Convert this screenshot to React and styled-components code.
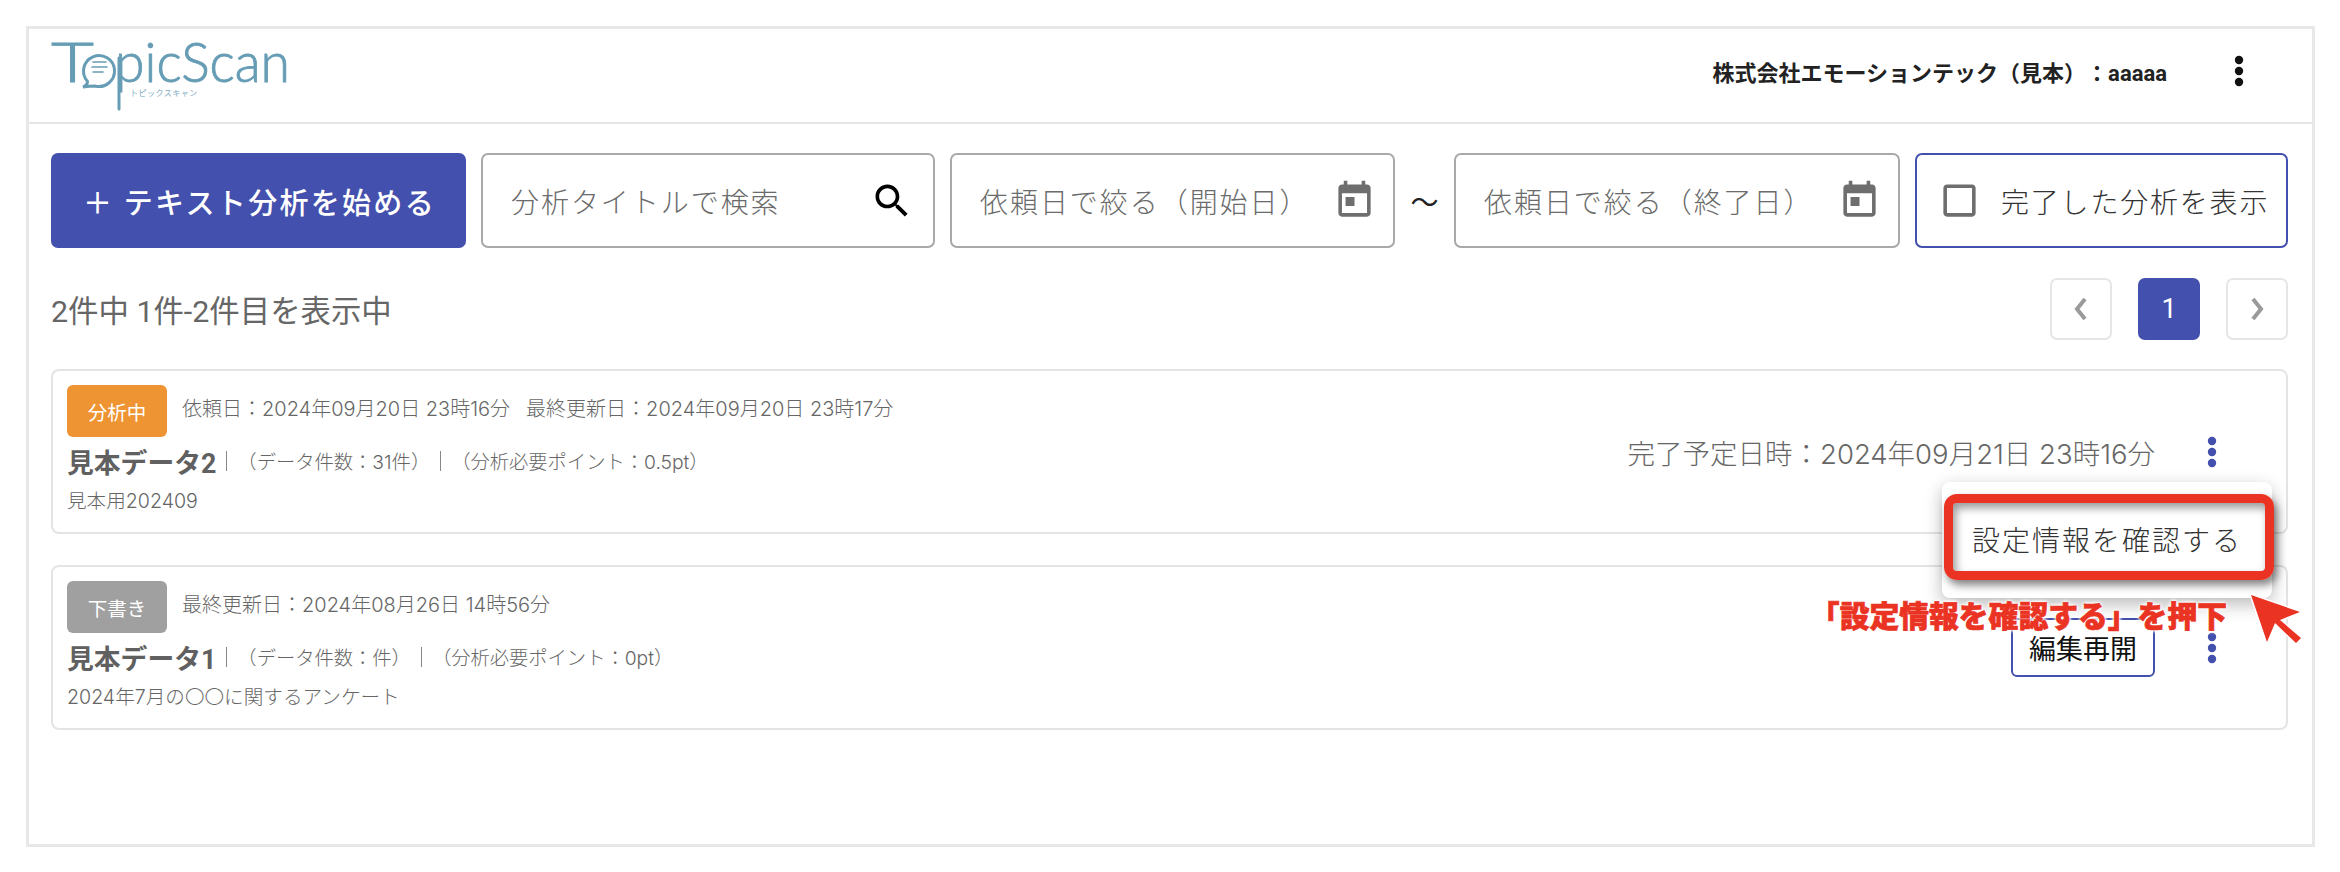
import React from 'react'
import styled, { createGlobalStyle } from 'styled-components'

const BLUE = '#4350ad'
const RED = '#ea3323'
const BODY_FONT = 'Inter, "Noto Sans CJK JP", sans-serif'

const GlobalStyle = createGlobalStyle`
  html, body { margin: 0; padding: 0; background: #fff; }
  body {
    font-family: Roboto, "Noto Sans CJK JP", sans-serif;
    text-spacing-trim: space-all;
  }
  * { box-sizing: border-box; }
`

const Page = styled.div`
  padding: 26px 25px 25px 26px;
`
const Frame = styled.div`
  height: 821px;
  border: 3px solid #e8e8e8;
`
const Header = styled.header`
  height: 95px;
  border-bottom: 2px solid #e6e6e6;
  display: flex;
  align-items: center;
  padding: 0 61px 10px 22px;
`
const Logo = styled.svg`
  width: 245px;
  height: 76px;
  align-self: flex-start;
  margin-top: 7px;
  display: block;
  overflow: visible;
`
const Account = styled.div`
  margin-left: auto;
  margin-right: 60px;
  font-size: 22px;
  font-weight: 700;
  color: #222;
`
const Content = styled.main`
  padding: 29px 24px 0 22px;
`
const Toolbar = styled.div`
  display: flex;
  gap: 15px;
  height: 95px;
`
const StartButton = styled.button`
  width: 415px;
  border: 0;
  border-radius: 7px;
  background: ${BLUE};
  color: #fff;
  font: 500 29px Roboto, "Noto Sans CJK JP", sans-serif;
  letter-spacing: 2.3px;
  padding: 0 0 0 2px;
`
const Field = styled.div`
  width: ${p => p.$w}px;
  display: flex;
  align-items: center;
  justify-content: space-between;
  padding: 0 ${p => p.$pr}px 0 ${p => p.$pl}px;
  border: 2px solid #a9a9a9;
  border-radius: 7px;
  font-size: 28px;
  font-weight: 300;
  letter-spacing: 1.95px;
  color: #6b6b6b;
`
const Tilde = styled.span`
  width: 29px;
  text-align: center;
  align-self: center;
  font-size: 28px;
  color: #222;
`
const ToggleBox = styled.label`
  flex: 1;
  display: flex;
  align-items: center;
  gap: 20px;
  padding-left: 21px;
  border: 2px solid ${BLUE};
  border-radius: 7px;
  font-size: 28px;
  font-weight: 300;
  letter-spacing: 1.8px;
  color: #333;
`
const Summary = styled.div`
  margin-top: 30px;
  height: 62px;
  display: flex;
  align-items: center;
  justify-content: space-between;
`
const Count = styled.div`
  font-size: 30.4px;
  color: #666;
`
const Pager = styled.nav`
  display: flex;
  gap: 26px;
`
const PageButton = styled.div`
  width: 62px;
  height: 62px;
  display: flex;
  align-items: center;
  justify-content: center;
  border: 2px solid ${p => (p.$active ? BLUE : '#e6e6e6')};
  border-radius: 7px;
  background: ${p => (p.$active ? BLUE : '#fff')};
  color: #fff;
  font-size: 27px;
`
const Cards = styled.div`
  margin-top: 29px;
  display: flex;
  flex-direction: column;
  gap: 31px;
`
const Card = styled.article`
  position: relative;
  height: 165px;
  padding: 14px 62px 0 14px;
  border: 2px solid #e4e4e4;
  border-radius: 8px;
  display: flex;
  justify-content: space-between;
`
const CardMain = styled.div`
  display: flex;
  flex-direction: column;
`
const MetaRow = styled.div`
  display: flex;
  align-items: center;
  gap: 15px;
  height: 52px;
  margin-bottom: 6px;
`
const Badge = styled.span`
  width: 100px;
  height: 52px;
  display: flex;
  align-items: center;
  justify-content: center;
  border-radius: 6px;
  background: ${p => p.$color};
  color: #fff;
  font-size: 19.5px;
`
const Dates = styled.div`
  display: flex;
  gap: 16px;
  font-family: ${BODY_FONT};
  font-size: 20px;
  font-weight: 300;
  color: #666;
  margin-top: -8px;
`
const TitleRow = styled.div`
  display: flex;
  align-items: center;
  height: 36px;
`
const Title = styled.h2`
  margin: 0;
  font-size: 26.8px;
  font-weight: 700;
  color: #606060;
`
const Sep = styled.i`
  width: 1px;
  height: 20px;
  margin: 0 10px;
  background: #888;
`
const Stat = styled.span`
  font-family: ${BODY_FONT};
  font-size: 19.3px;
  font-weight: 300;
  color: #666;
`
const Desc = styled.div`
  margin-top: 6px;
  font-family: ${BODY_FONT};
  font-size: 19.6px;
  font-weight: 300;
  color: #666;
`
const CardSide = styled.div`
  display: flex;
  align-items: center;
  gap: ${p => p.$gap}px;
  margin-top: -14px;
  height: 161px;
`
const Due = styled.div`
  font-family: ${BODY_FONT};
  font-size: 27.5px;
  font-weight: 300;
  color: #666;
`
const ResumeButton = styled.button`
  width: 144px;
  height: 59px;
  background: #fff;
  border: 2px solid ${BLUE};
  border-radius: 6px;
  font: 400 27px Roboto, "Noto Sans CJK JP", sans-serif;
  color: #111;
  padding: 0;
`
const Kebab = styled.svg`
  width: 24px;
  height: 32px;
  flex: none;
  display: block;
`
const Menu = styled.div`
  position: absolute;
  z-index: 5;
  top: 111px;
  right: 14px;
  width: 330px;
  height: 116px;
  padding-bottom: 2px;
  display: flex;
  align-items: center;
  justify-content: center;
  border-radius: 8px;
  background: #fff;
  box-shadow: 0 6px 18px rgba(0, 0, 0, 0.28);
  font-size: 28px;
  font-weight: 300;
  letter-spacing: 2px;
  color: #333;
`
const Highlight = styled.div`
  position: absolute;
  top: 12px;
  left: 2px;
  right: -2px;
  height: 86px;
  border: 9px solid ${RED};
  border-radius: 13px;
  box-shadow: 3px 5px 9px rgba(0, 0, 0, 0.5), inset 3px 5px 8px rgba(0, 0, 0, 0.4);
`
const Caption = styled.div`
  position: absolute;
  top: 110px;
  right: 45px;
  white-space: nowrap;
  font-size: 29.8px;
  font-weight: 900;
  letter-spacing: 0;
  color: ${RED};
  -webkit-text-stroke: 0.7px ${RED};
  text-shadow: 0 0 3px #fff, 0 0 3px #fff, 0 0 4px #fff, 0 0 4px #fff;
`
const Pointer = styled.svg`
  position: absolute;
  top: 108px;
  left: 305px;
  width: 60px;
  height: 60px;
  overflow: visible;
`

const Dots = ({ color, cy = 16 }) => (
  <Kebab viewBox="0 0 24 32">
    <circle cx="12" cy={cy - 11} r="4.2" fill={color} />
    <circle cx="12" cy={cy} r="4.2" fill={color} />
    <circle cx="12" cy={cy + 11} r="4.2" fill={color} />
  </Kebab>
)

const CalendarIcon = () => (
  <svg width="43" height="43" viewBox="0 0 24 24" fill="#6e6e6e">
    <path d="M19 3h-1V1h-2v2H8V1H6v2H5c-1.11 0-1.99.9-1.99 2L3 19c0 1.1.89 2 2 2h14c1.1 0 2-.9 2-2V5c0-1.1-.9-2-2-2zm0 16H5V8h14v11zM7 10h5v5H7z" />
  </svg>
)

const SearchIcon = () => (
  <svg width="44" height="44" viewBox="0 0 24 24" fill="#000">
    <path d="M15.5 14h-.79l-.28-.27C15.41 12.59 16 11.11 16 9.5 16 5.91 13.09 3 9.5 3S3 5.91 3 9.5 5.91 16 9.5 16c1.61 0 3.09-.59 4.23-1.57l.27.28v.79l5 4.99L20.49 19l-4.99-5zm-6 0C7.01 14 5 11.99 5 9.5S7.01 5 9.5 5 14 7.01 14 9.5 11.99 14 9.5 14z" />
  </svg>
)

const CheckboxIcon = () => (
  <svg width="43" height="43" viewBox="0 0 24 24" fill="#6e6e6e">
    <path d="M19 5v14H5V5h14m0-2H5c-1.1 0-2 .9-2 2v14c0 1.1.9 2 2 2h14c1.1 0 2-.9 2-2V5c0-1.1-.9-2-2-2z" />
  </svg>
)

const Chevron = ({ d }) => (
  <svg width="22" height="30" viewBox="0 0 22 30" fill="none" stroke="#9a9a9a" strokeWidth="4">
    <path d={d} />
  </svg>
)

const TopicScanLogo = () => (
  <Logo viewBox="0 0 245 76">
    <g fill="#669db5" stroke="#669db5" strokeWidth="0.9" fontFamily="Lato, sans-serif" fontWeight="300">
      <text x="0" y="46" fontSize="56" textLength="43" lengthAdjust="spacingAndGlyphs">T</text>
      <text x="64" y="46" fontSize="56" textLength="175" lengthAdjust="spacingAndGlyphs">picScan</text>
    </g>
    <text x="79" y="60" fill="#7fadc1" fontSize="8" fontFamily="'Noto Sans CJK JP', sans-serif" letterSpacing="0.5">トピックスキャン</text>
    <g fill="none" stroke="#669db5" strokeWidth="3" strokeLinecap="round">
      <path d="M32 51Q36.5 49 36.5 45.4A15.5 15.5 0 1 1 44 50Q38 50 32 51Z" fill="#fff" />
      <path d="M42 26h13M41 31h15M42 36h10" strokeWidth="1.6" />
      <path d="M68 22v51" />
    </g>
  </Logo>
)

export default function App() {
  return (
    <>
      <GlobalStyle />
      <Page>
        <Frame>
          <Header>
            <TopicScanLogo />
            <Account>株式会社エモーションテック（見本）：aaaaa</Account>
            <Dots color="#111" />
          </Header>
          <Content>
            <Toolbar>
              <StartButton>＋ テキスト分析を始める</StartButton>
              <Field $w={454} $pl={28} $pr={19}>分析タイトルで検索<SearchIcon /></Field>
              <Field $w={445} $pl={28} $pr={17}>依頼日で絞る（開始日）<CalendarIcon /></Field>
              <Tilde>〜</Tilde>
              <Field $w={446} $pl={28} $pr={17}>依頼日で絞る（終了日）<CalendarIcon /></Field>
              <ToggleBox><CheckboxIcon />完了した分析を表示</ToggleBox>
            </Toolbar>
            <Summary>
              <Count>2件中 1件-2件目を表示中</Count>
              <Pager>
                <PageButton><Chevron d="M15 5 7 15l8 10" /></PageButton>
                <PageButton $active>1</PageButton>
                <PageButton><Chevron d="M7 5l8 10-8 10" /></PageButton>
              </Pager>
            </Summary>
            <Cards>
              <Card>
                <CardMain>
                  <MetaRow>
                    <Badge $color="#ee9433">分析中</Badge>
                    <Dates>
                      <span>依頼日：2024年09月20日 23時16分</span>
                      <span>最終更新日：2024年09月20日 23時17分</span>
                    </Dates>
                  </MetaRow>
                  <TitleRow>
                    <Title>見本データ2</Title>
                    <Sep />
                    <Stat>（データ件数：31件）</Stat>
                    <Sep />
                    <Stat>（分析必要ポイント：0.5pt）</Stat>
                  </TitleRow>
                  <Desc>見本用202409</Desc>
                </CardMain>
                <CardSide $gap={45}>
                  <Due>完了予定日時：2024年09月21日 23時16分</Due>
                  <Dots color={BLUE} />
                </CardSide>
                <Menu>
                  設定情報を確認する
                  <Highlight />
                  <Caption>「設定情報を確認する」を押下</Caption>
                  <Pointer viewBox="0 0 60 60">
                    <path
                      d="M4 5 53 22 33 30 54 48 49 53 28 33 20 52Z"
                      fill={RED}
                      stroke="#fff"
                      strokeWidth="3"
                      paintOrder="stroke"
                    />
                  </Pointer>
                </Menu>
              </Card>
              <Card>
                <CardMain>
                  <MetaRow>
                    <Badge $color="#a0a0a0">下書き</Badge>
                    <Dates>
                      <span>最終更新日：2024年08月26日 14時56分</span>
                    </Dates>
                  </MetaRow>
                  <TitleRow>
                    <Title>見本データ1</Title>
                    <Sep />
                    <Stat>（データ件数：件）</Stat>
                    <Sep />
                    <Stat>（分析必要ポイント：0pt）</Stat>
                  </TitleRow>
                  <Desc>2024年7月の〇〇に関するアンケート</Desc>
                </CardMain>
                <CardSide $gap={45}>
                  <ResumeButton>編集再開</ResumeButton>
                  <Dots color={BLUE} />
                </CardSide>
              </Card>
            </Cards>
          </Content>
        </Frame>
      </Page>
    </>
  )
}
